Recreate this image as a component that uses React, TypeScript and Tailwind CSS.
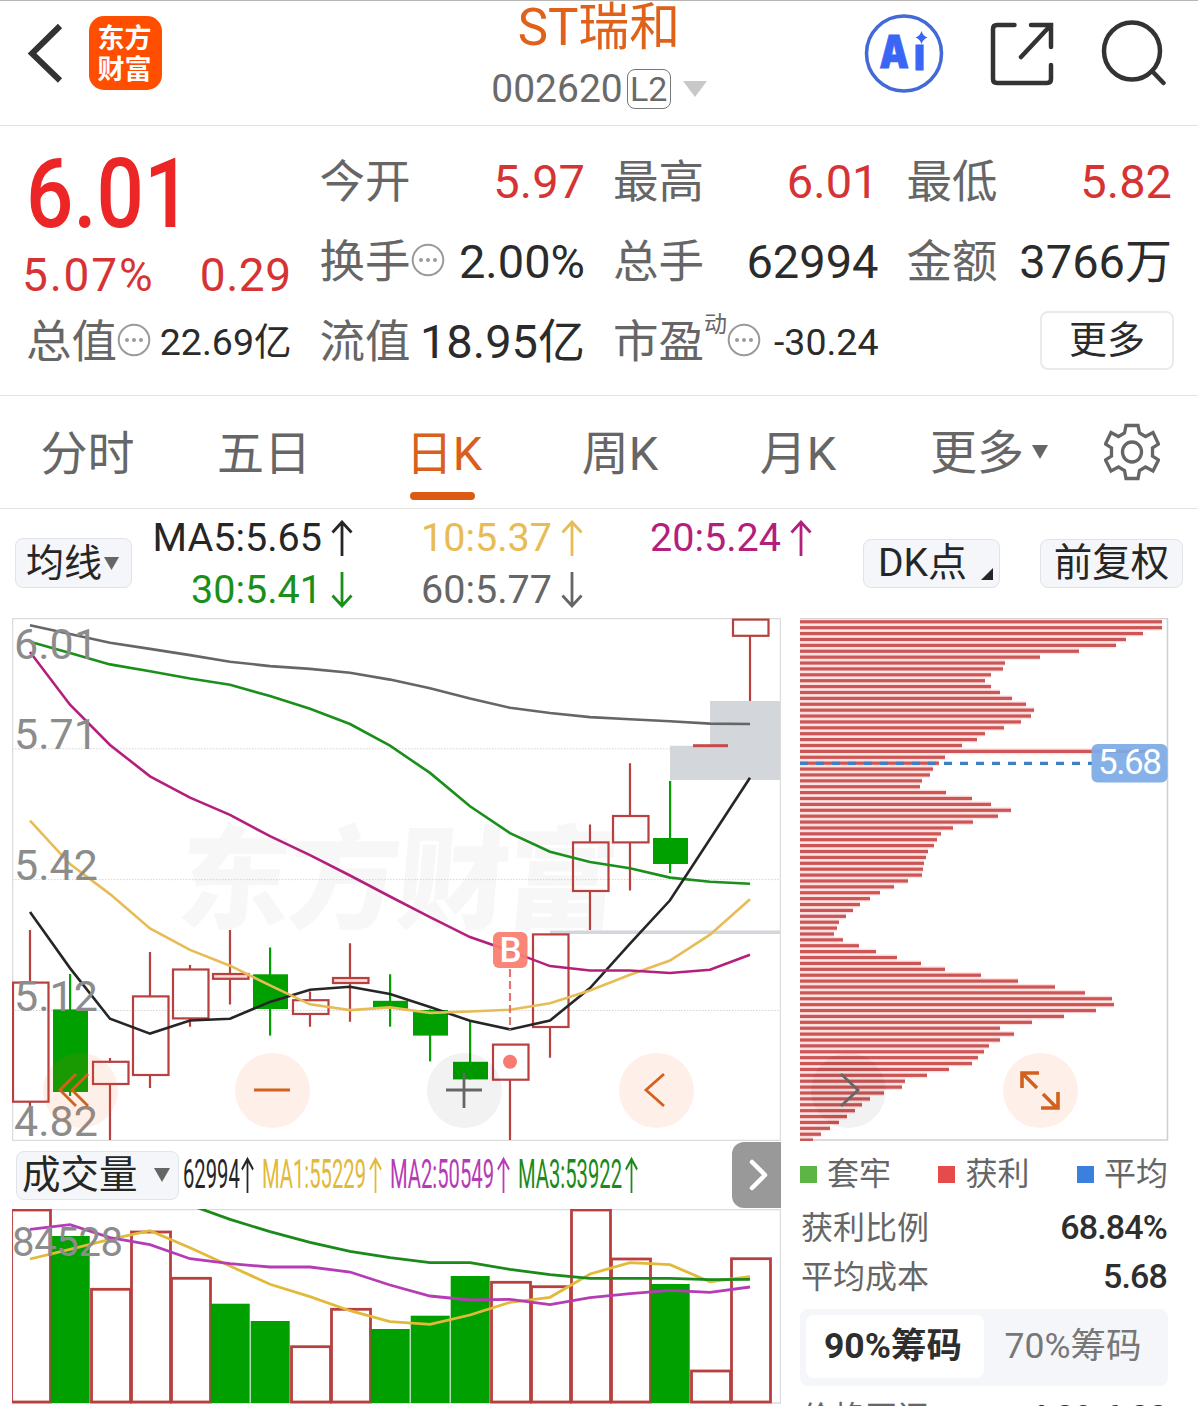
import type { ReactNode } from "react";

const RED = "#b8403f";
const GREEN = "#00a000";

// [high, bodyTop, bodyBottom, low, rising]
type Candle = [number, number, number, number, boolean];

const candles: Candle[] = [
  [312, 364.6, 483.7, 500, true],
  [356, 391.4, 474, 478, false],
  [440, 443.8, 466, 522, true],
  [334, 378.4, 457, 470, true],
  [347, 351.5, 400.4, 408.7, true],
  [312, 356, 360.8, 386.6, true],
  [329.5, 356.3, 391, 417.6, false],
  [373.5, 382.2, 396, 408.7, true],
  [325.3, 360, 365, 403.8, true],
  [356.3, 382.8, 390.8, 408.7, false],
  [391.4, 392, 417.6, 443.4, false],
  [403.5, 443.8, 461.4, 461.4, false],
  [426.6, 426.6, 461.7, 522, true],
  [316.4, 316.4, 409, 439.7, true],
  [206.5, 224.4, 273, 312, true],
  [145.2, 198, 224.4, 272.6, true],
  [163, 220, 246, 255, false],
  [127.7, 127.7, 127.7, 127.7, true],
  [1.6, 1.6, 17.8, 83, true],
];

const priceLines = [
  { color: "#666666", ys: [7.2, 16.1, 24.7, 30.9, 37.1, 43.7, 48.1, 50.9, 54.7, 61.6, 70.2, 80.5, 89.8, 95, 99.1, 101.2, 103.2, 105.6, 106] },
  { color: "#1b8f1b", ys: [23.7, 35, 46.4, 53.3, 60.5, 66.7, 78.1, 90.8, 106, 127.7, 154.9, 188.3, 215.1, 233.7, 244.1, 250.3, 259.6, 263.7, 265.8] },
  { color: "#262626", ys: [294, 350.1, 400.7, 415.6, 402.5, 400.7, 383.9, 371.8, 368.7, 376, 389, 402.8, 411.4, 402.5, 370.1, 325.7, 282.3, 221, 159.7] },
  { color: "#e8bc55", ys: [202.7, 246.1, 276.1, 310.5, 331.9, 347.7, 367.3, 386.3, 392.1, 389.4, 394.9, 393.5, 391.8, 385.3, 372.5, 356.7, 342.5, 316.7, 281.3] },
  { color: "#b3207c", ys: [34, 86.7, 127, 158.3, 179.7, 196.9, 218.2, 237.2, 257.5, 278.5, 299.2, 319.1, 332.9, 348.1, 352.5, 352.5, 355, 351.8, 336.7] },
];

const volumes: [number, boolean][] = [
  [1, true], [27, false], [80.3, true], [23, true], [69.3, true], [94.7, false], [112, false],
  [137.7, true], [100.3, true], [120, false], [106.7, false], [67, false], [73.3, true],
  [77.7, true], [1, true], [50, true], [75, false], [162, true], [49.7, true],
];

const volumeLines = [
  { color: "#e3b93a", ys: [50, 40.3, 30.3, 21.7, 38.7, 57, 75.3, 87.7, 101.7, 112.7, 115.3, 106, 93.3, 88.3, 65, 53.7, 55.7, 72.7, 67.7] },
  { color: "#b63cb6", ys: [20.3, 15.7, 28.7, 35.7, 49.7, 54.7, 58, 58, 63, 76, 87, 91, 90.3, 95.7, 88.7, 84.7, 81.3, 83.3, 78] },
  { color: "#1b8a1b", ys: [-55, -42, -30, -18, -4, 10.3, 22.7, 33.3, 42.3, 48.7, 53.7, 53.7, 60.3, 65.7, 69.3, 69.3, 69.3, 70.7, 70.3] },
];

// chip distribution, one bar per price level from 6.01 down to 4.82
const chips = [
  361, 361, 342, 325, 315, 278, 239, 204, 202, 190, 184, 190, 199, 211, 225, 233, 230, 220, 203, 184,
  176, 161, 348, 144, 138, 132, 129, 121, 119, 145, 171, 190, 210, 197, 172, 152, 140, 136, 133, 127,
  125, 123, 122, 121, 107, 93, 79, 69, 59, 52, 45, 38, 36, 33, 42, 58, 75, 96, 120, 144, 180, 217, 254,
  284, 311, 313, 295, 263, 231, 199, 213, 199, 188, 183, 177, 171, 148, 126, 104, 101, 83, 69, 61, 54,
  46, 38, 29, 20, 12,
];

const cx = (i: number) => 18 + i * 40;
const toPoints = (ys: number[]) => ys.map((y, i) => `${cx(i)},${y}`).join(" ");

const Arrow = ({ down = false, narrow = false }: { down?: boolean; narrow?: boolean }) => (
  <svg
    className={narrow ? "h-9 w-[13px]" : "h-9 w-[22px]"}
    viewBox="0 0 22 36"
    preserveAspectRatio="none"
    fill="none"
    stroke="currentColor"
    strokeWidth={narrow ? 3 : 2.8}
  >
    <path d={down ? "M11 0V34M1.5 23.5 11 34l9.5-10.5" : "M11 36V2M1.5 12.5 11 2l9.5 10.5"} />
  </svg>
);

const Dots = () => (
  <svg className="h-[34px] w-[34px] shrink-0" viewBox="0 0 34 34" fill="#9a9a9a">
    <circle cx="17" cy="17" r="15.3" fill="none" stroke="#9a9a9a" strokeWidth="2" />
    <circle cx="10" cy="17" r="2" />
    <circle cx="17" cy="17" r="2" />
    <circle cx="24" cy="17" r="2" />
  </svg>
);

interface QuoteProps {
  label: string;
  value: string;
  red?: boolean;
  dots?: boolean;
  small?: boolean;
  sup?: string;
}

const Quote = ({ label, value, red, dots, small, sup }: QuoteProps) => (
  <div className="flex h-20 items-center justify-between whitespace-nowrap">
    <span className="flex items-center pt-[3px] text-[45.5px] text-[#666]">
      {label}
      {sup && <sup className="-top-[19px] text-[23px]">{sup}</sup>}
      {dots && (
        <span className="-mt-2 flex">
          <Dots />
        </span>
      )}
    </span>
    <span className={`pt-px ${small ? "text-[37.5px]" : "text-[47px]"} ${red ? "text-[#d63434]" : "text-[#2b2b2b]"}`}>{value}</span>
  </div>
);

const Header = () => (
  <header className="flex h-[126px] items-start justify-between border-t border-b border-t-[#b5b5b5] border-b-[#e2e2e2]">
    <div className="flex w-[400px] items-center pt-[15px] pl-[27px]">
      <svg className="h-[62px] w-[36px]" viewBox="0 0 36 62" fill="none" stroke="#333" strokeWidth="6">
        <path d="M33 4 5 31.5l28 27" />
      </svg>
      <div className="ml-[26px] flex h-[74px] w-[73px] flex-col items-center justify-center rounded-[15px] bg-[#ff4e00] pr-0.5 pb-0.5 font-['Noto_Sans_CJK_SC'] text-[27px] leading-[31px] font-bold text-white">
        <span>东方</span>
        <span>财富</span>
      </div>
    </div>
    <div className="flex flex-col items-center">
      <h1 className="text-[51px] leading-[54px] text-[#e0621a]">ST瑞和</h1>
      <div className="mt-3 flex items-center text-[39px] leading-[44px] text-[#6a6a6a]">
        <span>002620</span>
        <span className="ml-1 flex h-10 w-11 items-center justify-center rounded-lg border border-[#777] text-[34px]">L2</span>
        <svg className="ml-3 h-4 w-6" viewBox="0 0 24 16" fill="#c8c8c8">
          <path d="M0 0h24L12 16z" />
        </svg>
      </div>
    </div>
    <div className="flex w-[400px] justify-end gap-[46px] pt-[13px] pr-8">
      <svg className="h-20 w-20" viewBox="0 0 80 80">
        <circle cx="40" cy="39.5" r="37.5" fill="none" stroke="#4169d8" strokeWidth="3.5" />
        <text x="19" y="54" fontFamily="Inter" fontWeight="900" fontSize="45" fill="#3a66f5" stroke="#3a66f5" strokeWidth="1" transform="scale(.82 1)">
          A
          <tspan x="61" y="56">ı</tspan>
        </text>
        <path d="M57.5 17q1.5 5 6 6.500-4.500 1.500-6 6.500-1.500-5-6-6.500 4.500-1.500 6-6.500z" fill="#3a66f5" />
      </svg>
      <svg className="mt-2 h-[64px] w-[64px]" viewBox="0 0 64 64" fill="none" stroke="#333" strokeWidth="4.5" strokeLinecap="round">
        <path d="M24.5 3H7Q3 3 3 7v50q0 4 4 4h50q4 0 4-4V43M41 3h20v22M60 4 31 35" />
      </svg>
      <svg className="mt-1.5 h-[66px] w-[66px]" viewBox="0 0 66 66" fill="none" stroke="#333" strokeWidth="4.5" strokeLinecap="round">
        <ellipse cx="32" cy="31" rx="28" ry="28.5" />
        <path d="m52 51 11.5 12" />
      </svg>
    </div>
  </header>
);

const QuotePanel = () => (
  <section className="grid h-[270px] grid-cols-4 gap-x-[28px] border-b border-[#e2e2e2] pt-4 pr-[26px] pl-[26px]">
    <div>
      <div className="h-[102px] origin-left scale-x-[.86] text-[97px] leading-[105px] font-medium text-[#ec2626]">6.01</div>
      <div className="flex h-[58px] justify-between text-[46px] leading-[63px] text-[#d63434]">
        <span className="-ml-1 tracking-[1.8px]">5.07%</span>
        <span className="tracking-[.5px]">0.29</span>
      </div>
      <Quote label="总值" value="22.69亿" dots small />
    </div>
    <div>
      <Quote label="今开" value="5.97" red />
      <Quote label="换手" value="2.00%" dots />
      <Quote label="流值" value="18.95亿" />
    </div>
    <div>
      <Quote label="最高" value="6.01" red />
      <Quote label="总手" value="62994" />
      <Quote label="市盈" value="-30.24" sup="动" dots small />
    </div>
    <div>
      <Quote label="最低" value="5.82" red />
      <Quote label="金额" value="3766万" />
      <div className="flex h-20 items-center justify-end">
        <button className="-mt-1 -mr-0.5 h-[59px] w-[134px] rounded-lg border-2 border-[#e8eaec] text-[38px] leading-[52px] text-[#2b2b2b]">更多</button>
      </div>
    </div>
  </section>
);

const tabs = ["分时", "五日", "日K", "周K", "月K"];

const Tabs = () => (
  <nav className="flex h-[113px] items-center border-b border-[#e2e2e2] text-[47px] text-[#666]">
    {tabs.map((tab) => (
      <div key={tab} className="flex h-full w-[178px] flex-col items-center first:w-[175px]">
        <span className={`mt-6 leading-[68px] ${tab === "日K" ? "ml-1 text-[#d8601c]" : ""}`}>{tab}</span>
        {tab === "日K" && <span className="mt-1 h-2 w-[65px] rounded-full bg-[#db5a14]" />}
      </div>
    ))}
    <div className="ml-[43px] flex items-center gap-2">
      <span className="pt-0.5">更多</span>
      <svg className="h-[14px] w-4" viewBox="0 0 16 14" fill="#666">
        <path d="M0 0h16L8 14z" />
      </svg>
    </div>
    <svg className="ml-[56px] h-[58px] w-[56px]" viewBox="0 0 56 58" fill="none" stroke="#666" strokeWidth="3.3">
      <path d="M22 2.500h12l1.500 7.500 6 3.500 7.500-4L54.500 21l-6 4v8l6 4L49 48l-7.500-4-6 3.500-1.500 8H22l-1.500-8-6-3.500L7 48 1.500 37l6-4v-8l-6-4L7 9.500l7.500 4 6-3.500z" />
      <ellipse cx="28" cy="29" rx="9.500" ry="10" />
    </svg>
  </nav>
);

const Pill = ({ className, children }: { className: string; children: ReactNode }) => (
  <button className={`flex items-center rounded-lg border border-[#e0e3e8] bg-[#f5f6f9] leading-none whitespace-nowrap text-[#262626] ${className}`}>
    {children}
  </button>
);

const Average = ({ text, color, down }: { text: string; color: string; down?: boolean }) => (
  <span className={`flex items-center justify-end gap-[9px] ${color}`}>
    {text}
    <Arrow down={down} />
  </span>
);

const AverageBar = () => (
  <div className="flex h-[109px] pl-[15px]">
    <Pill className="mt-[29px] h-[50px] w-[117px] gap-0.5 pl-2.5 text-[38px]">
      均线
      <svg className="h-[13px] w-[15px]" viewBox="0 0 15 13" fill="#666">
        <path d="M0 0h15L7.5 13z" />
      </svg>
    </Pill>
    <div className="grid h-[107px] grid-cols-[221px_230px_229px] grid-rows-2 pt-[3px] text-[39.5px] leading-[52px]">
      <Average text="MA5:5.65" color="text-[#262626]" />
      <Average text="10:5.37" color="text-[#e8bc55]" />
      <Average text="20:5.24" color="text-[#b3207c]" />
      <Average text="30:5.41" color="text-[#1b8f1b]" down />
      <Average text="60:5.77" color="text-[#666]" down />
    </div>
    <Pill className="mt-[30px] ml-[51px] h-[49px] w-[137px] justify-between pr-1.5 pl-3.5 text-[39px]">
      DK点
      <svg className="mt-5 h-3 w-3" viewBox="0 0 12 12" fill="#262626">
        <path d="M12 0v12H0z" />
      </svg>
    </Pill>
    <Pill className="mt-[30px] ml-10 h-[49px] w-[143px] justify-center text-[38.5px]">前复权</Pill>
  </div>
);

const axisLabels: [string, number][] = [
  ["6.01", 40.5],
  ["5.71", 130.8],
  ["5.42", 261.6],
  ["5.12", 392.5],
  ["4.82", 518],
];

const PriceChart = () => (
  <svg className="block h-[523px] w-[769px]" viewBox="0 0 769 523" fill="none">
    <text x="164" y="302" fontSize="112" fontWeight="900" fontFamily="Noto Sans CJK SC" fill="#f7f7f7" textLength="440" transform="translate(26 0) skewX(-5)">
      东方财富
    </text>
    <rect x="0.5" y="0.5" width="768" height="522" stroke="#dcdcdc" strokeWidth="1.5" />
    {[130.8, 261.6, 392.5].map((y) => (
      <line key={y} x1="0" x2="768" y1={y} y2={y} stroke="#d4d4d4" strokeDasharray="1.5 1.5" />
    ))}
    <path d="M658 127.7h40V83h70v79H658z" fill="#d3d6db" />
    <rect x="538" y="312.5" width="230" height="3.5" fill="#d3d6db" />
    {candles.map(([high, top, bottom, low, rising], i) => {
      if (top === bottom) return <rect key={i} x={cx(i) - 17} y={top - 1.5} width="35" height="3" fill="#c54a4a" />;
      return rising ? (
        <g key={i} stroke={RED} strokeWidth="2.2">
          <path d={`M${cx(i)} ${high}V${top}M${cx(i)} ${bottom}V${low}`} />
          <rect x={cx(i) - 17} y={top} width="35.5" height={bottom - top} fill={bottom - top < 6 ? "#fbdada" : "none"} />
        </g>
      ) : (
        <g key={i} fill={GREEN}>
          <rect x={cx(i) - 1} y={high} width="2.2" height={low - high} />
          <rect x={cx(i) - 17} y={top} width="35" height={bottom - top} />
        </g>
      );
    })}
    {priceLines.map((line) => (
      <polyline key={line.color} points={toPoints(line.ys)} stroke={line.color} strokeWidth="2.6" />
    ))}
    <circle cx="498" cy="443.8" r="7" fill="#f77b70" />
    <line x1="498" x2="498" y1="351" y2="412" stroke="#e0776e" strokeWidth="2.2" strokeDasharray="8 4" />
    <rect x="481" y="314" width="34.5" height="36" rx="6" fill="#fa7c6f" fillOpacity=".93" />
    <text x="498.5" y="344" textAnchor="middle" fontFamily="Roboto" fontSize="35" fontWeight="500" fill="#fff">
      B
    </text>
    {axisLabels.map(([label, y]) => (
      <text key={label} x="2" y={y} fontFamily="Roboto" fontSize="43" fill="#8c8c8c" textLength="84">
        {label}
      </text>
    ))}
  </svg>
);

const VolumeChart = () => (
  <svg className="block h-[195px] w-[769px]" viewBox="0 0 769 195" fill="none">
    <rect x="0.5" y="0.5" width="768" height="193.5" stroke="#dcdcdc" strokeWidth="1.5" />
    {volumes.map(([top, rising], i) =>
      rising ? (
        <rect key={i} x={cx(i) - 18.5} y={top} width="39" height={193 - top} stroke={RED} strokeWidth="2.8" />
      ) : (
        <rect key={i} x={cx(i) - 19.3} y={top} width="39" height={194 - top} fill={GREEN} />
      )
    )}
    {volumeLines.map((line) => (
      <polyline key={line.color} points={toPoints(line.ys)} stroke={line.color} strokeWidth="2.8" />
    ))}
    <text x="0" y="47" fontFamily="Roboto" fontSize="40" fill="#8c8c8c" textLength="111">
      84528
    </text>
  </svg>
);

const VolumeLabel = ({ text, className }: { text: string; className: string }) => (
  <div className={`flex items-center justify-between ${className}`}>
    <span className="w-0">
      <span className="inline-block origin-left scale-x-[.505] text-[40px] whitespace-nowrap">{text}</span>
    </span>
    <Arrow narrow />
  </div>
);

const VolumeBar = () => (
  <div className="flex h-[68px] items-center pl-1">
    <Pill className="h-[49px] w-[163px] justify-between pr-2 pl-[5px] text-[38.5px]">
      成交量
      <svg className="h-[14px] w-4" viewBox="0 0 16 14" fill="#666">
        <path d="M0 0h16L8 14z" />
      </svg>
    </Pill>
    <VolumeLabel text="62994" className="ml-1 w-[71px] text-[#262626]" />
    <VolumeLabel text="MA1:55229" className="ml-2 w-[120px] text-[#e3b93a]" />
    <VolumeLabel text="MA2:50549" className="ml-2 w-[120px] text-[#b63cb6]" />
    <VolumeLabel text="MA3:53922" className="ml-2 w-[120px] text-[#1b8a1b]" />
    <button className="ml-auto flex h-[66px] w-[49px] items-center justify-center rounded-l-xl bg-[#999]">
      <svg className="ml-1 h-8 w-5" viewBox="0 0 20 32" fill="none" stroke="#fff" strokeWidth="4.5" strokeLinecap="round" strokeLinejoin="round">
        <path d="m3 3 13 13L3 29" />
      </svg>
    </button>
  </div>
);

const ChipChart = () => (
  <svg className="block h-[523px] w-[369px]" viewBox="0 0 369 523" fill="none">
    <path d="M0 .5h367.5V522H0" stroke="#cfcfcf" strokeWidth="1.5" />
    {chips.map((length, i) => (
      <g key={i}>
        <rect x="0" y={0.8 + i * 5.89} width={length + 1} height="5.89" fill="#fde0e0" />
        <rect x="0" y={2.2 + i * 5.89} width={length + 1} height="3.2" fill="#cc5555" />
      </g>
    ))}
    <line x1="0" x2="292" y1="145.3" y2="145.3" stroke="#3f80c4" strokeWidth="3.2" strokeDasharray="8 8" />
    <rect x="291.5" y="126" width="76" height="38.5" rx="6" fill="#7dabe6" fillOpacity=".93" />
    <text x="298" y="156" fontFamily="Roboto" fontSize="35" fill="#fff" textLength="64">
      5.68
    </text>
  </svg>
);

const legend = [
  { label: "套牢", color: "bg-[#5cb544]" },
  { label: "获利", color: "bg-[#e54b4b]" },
  { label: "平均", color: "bg-[#3a80dc]" },
];

const ChipRow = ({ label, value }: { label: string; value: string }) => (
  <div className="flex h-[49px] items-center justify-between text-[32px] text-[#666]">
    <span>{label}</span>
    <span className="text-[34px] font-medium tracking-tight text-[#2e2e2e]">{value}</span>
  </div>
);

const ChipPanel = () => (
  <div className="w-[368px]">
    <ChipChart />
    <div className="flex h-[62px] items-center justify-between pt-1 text-[32px] text-[#666]">
      {legend.map((item) => (
        <span key={item.label} className="flex items-center gap-2.5">
          <span className={`h-[17px] w-[17px] ${item.color}`} />
          {item.label}
        </span>
      ))}
    </div>
    <div className="pr-px pl-px">
      <ChipRow label="获利比例" value="68.84%" />
      <ChipRow label="平均成本" value="5.68" />
    </div>
    <div className="mt-2 flex h-[77px] items-center rounded-lg bg-[#f5f6f9] p-1.5 pb-2 text-[35.5px]">
      <span className="flex h-full w-[178px] items-center justify-center rounded-lg bg-white pr-1 font-bold text-[#2e2e2e]">90%筹码</span>
      <span className="flex-1 text-center text-[#777]">70%筹码</span>
    </div>
    <div className="pt-[7px] pr-px pl-px">
      <ChipRow label="价格区间" value="4.89-6.00" />
    </div>
  </div>
);

const tools = [
  { name: "first", gray: false, path: "M33 21 17 37l16 16M45 21 29 37l16 16" },
  { name: "minus", gray: false, path: "M19 37h36" },
  { name: "plus", gray: true, path: "M19 37h36M37 20v35" },
  { name: "prev", gray: false, path: "M45 21 27 37l18 16" },
  { name: "next", gray: true, path: "M30 21l17 16-17 16" },
  { name: "expand", gray: false, path: "M19 35V20h17M20 21l14 14M40 41l14 14M55 39v16H38" },
];

const ChartTools = () => (
  <div className="absolute top-[435px] left-[43px] flex gap-[117px]">
    {tools.map((tool) => (
      <button key={tool.name} className={`h-[75px] w-[75px] rounded-full ${tool.gray ? "bg-black/5" : "bg-[#f56a20]/10"}`}>
        <svg viewBox="0 0 75 75" fill="none" stroke={tool.gray ? "#666" : "#d2601f"} strokeWidth={tool.name === "expand" ? 3.6 : 2.8}>
          <path d={tool.path} />
        </svg>
      </button>
    ))}
  </div>
);

export default function App() {
  return (
    <div className="h-[1406px] w-[1198px] overflow-hidden bg-white font-[Roboto,'Noto_Sans_CJK_SC',sans-serif]">
      <Header />
      <QuotePanel />
      <Tabs />
      <AverageBar />
      <main className="relative flex gap-[19px] pl-3">
        <div className="w-[769px]">
          <PriceChart />
          <VolumeBar />
          <VolumeChart />
        </div>
        <ChipPanel />
        <ChartTools />
      </main>
    </div>
  );
}
